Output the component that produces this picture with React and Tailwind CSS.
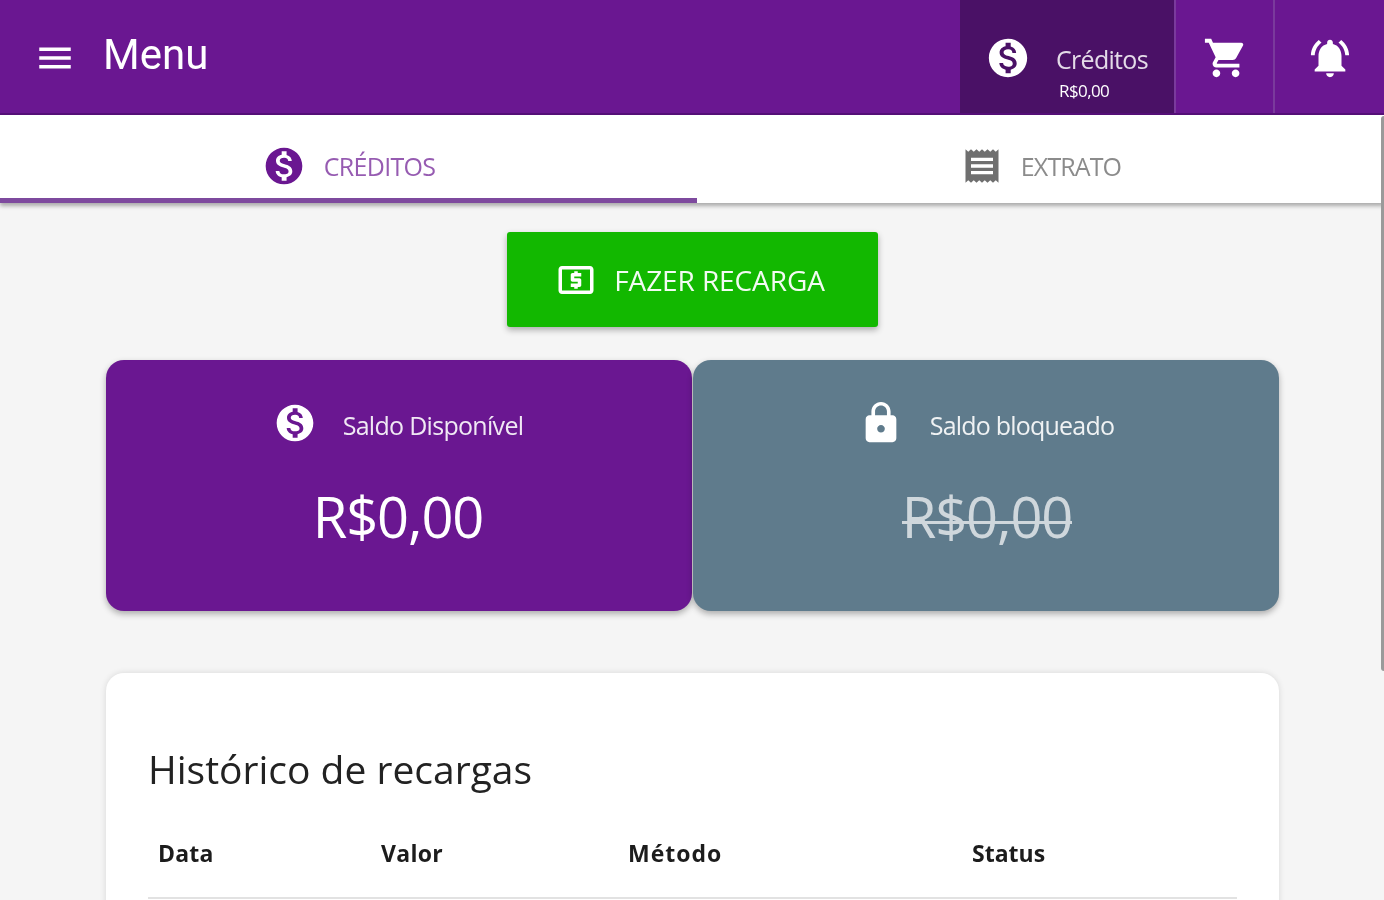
const P = {
  money: "M12 2C6.48 2 2 6.48 2 12s4.48 10 10 10 10-4.48 10-10S17.52 2 12 2zm1.41 16.09V20h-2.67v-1.93c-1.71-.36-3.16-1.46-3.27-3.4h1.96c.1 1.05.82 1.87 2.65 1.87 1.96 0 2.4-.98 2.4-1.59 0-.83-.44-1.61-2.67-2.14-2.48-.6-4.18-1.62-4.18-3.67 0-1.72 1.39-2.84 3.11-3.21V4h2.67v1.95c1.86.45 2.79 1.86 2.85 3.39H14.3c-.05-1.11-.64-1.87-2.22-1.87-1.5 0-2.4.68-2.4 1.64 0 .84.65 1.39 2.67 1.91s4.18 1.39 4.18 3.91c-.01 1.83-1.38 2.83-3.12 3.16z",
  menu: "M3 18h18v-2H3v2zm0-5h18v-2H3v2zm0-7v2h18V6H3z",
  cart: "M7 18c-1.1 0-1.99.9-1.99 2S5.9 22 7 22s2-.9 2-2-.9-2-2-2zM1 2v2h2l3.6 7.59-1.35 2.45c-.16.28-.25.61-.25.96 0 1.1.9 2 2 2h12v-2H7.42c-.14 0-.25-.11-.25-.25l.03-.12.9-1.63h7.45c.75 0 1.41-.41 1.75-1.03l3.58-6.49c.08-.14.12-.31.12-.48 0-.55-.45-1-1-1H5.21l-.94-2H1zm16 16c-1.1 0-1.99.9-1.99 2s.89 2 1.99 2 2-.9 2-2-.9-2-2-2z",
  bell: "M7.58 4.08L6.15 2.65C3.75 4.48 2.17 7.3 2.03 10.5h2c.15-2.65 1.51-4.97 3.55-6.42zm12.39 6.42h2c-.15-3.2-1.73-6.02-4.12-7.85l-1.42 1.43c2.02 1.45 3.39 3.77 3.54 6.42zM18 11c0-3.07-1.64-5.64-4.5-6.32V4c0-.83-.67-1.5-1.5-1.5s-1.5.67-1.5 1.5v.68C7.63 5.36 6 7.92 6 11v5l-2 2v1h16v-1l-2-2v-5zm-6 11c.14 0 .27-.01.4-.04.65-.14 1.18-.58 1.44-1.18.1-.24.15-.5.15-.78h-4c.01 1.1.9 2 2.01 2z",
  lock: "M18 8h-1V6c0-2.76-2.24-5-5-5S7 3.24 7 6v2H6c-1.1 0-2 .9-2 2v10c0 1.1.9 2 2 2h12c1.1 0 2-.9 2-2V10c0-1.1-.9-2-2-2zm-6 9c-1.1 0-2-.9-2-2s.9-2 2-2 2 .9 2 2-.9 2-2 2zm3.1-9H8.9V6c0-1.71 1.39-3.1 3.1-3.1 1.71 0 3.1 1.39 3.1 3.1v2z",
  receipt: "M18 17H6v-2h12v2zm0-4H6v-2h12v2zm0-4H6V7h12v2zM3 22l1.5-1.5L6 22l1.5-1.5L9 22l1.5-1.5L12 22l1.5-1.5L15 22l1.5-1.5L18 22l1.5-1.5L21 22V2l-1.5 1.5L18 2l-1.5 1.5L15 2l-1.5 1.5L12 2l-1.5 1.5L9 2 7.5 3.5 6 2 4.5 3.5 3 2v20z",
  atm: "M11 17h2v-1h1c.55 0 1-.45 1-1v-3c0-.55-.45-1-1-1h-3v-1h4V8h-2V7h-2v1h-1c-.55 0-1 .45-1 1v3c0 .55.45 1 1 1h3v1H9v2h2v1zm9-13H4c-1.11 0-1.99.89-1.99 2L2 18c0 1.11.89 2 2 2h16c1.11 0 2-.89 2-2V6c0-1.11-.89-2-2-2zm0 14H4V6h16v12z",
};

function Icon({ d, size, height, className = "" }) {
  return (
    <svg viewBox="0 0 24 24" width={size} height={height || size} preserveAspectRatio="none" fill="currentColor" className={`shrink-0 ${className}`}>
      <path d={d} />
    </svg>
  );
}

function SaldoCard({ icon, iconSize, label, value, className, rowClass = "", valueClass = "", labelClass = "", struck = false }) {
  return (
    <div className={`flex-1 h-[251px] rounded-[18px] shadow-[0_3px_6px_rgba(0,0,0,0.3)] flex flex-col items-center text-white ${className}`}>
      <div className={`flex items-center gap-[26px] mt-[40px] h-[46px] ${rowClass}`}>
        <Icon d={icon} size={iconSize} />
        <span className={`text-[25px] leading-none opacity-90 mt-[5px] ${labelClass}`}>{label}</span>
      </div>
      <div className={`relative text-[56px] leading-none mt-[42px] tracking-[-1.1px] ${valueClass}`}>
        {value}
        {struck && <span className="absolute left-0 right-0 top-[33px] h-[3px] bg-current" />}
      </div>
    </div>
  );
}

export default function App() {
  return (
    <div className="relative h-[900px] overflow-hidden bg-[#f5f5f5] font-['Open_Sans','Noto_Sans',sans-serif] blur-[0.7px]">
      <header className="flex h-[115px] bg-[#6a1791] border-b-2 border-[#551078] text-white">
        <div className="flex items-center flex-1 pl-[34px]">
          <Icon d={P.menu} size={42} className="mt-[2px]" />
          <span className="ml-[27px] mb-[3px] text-[42px] leading-none font-['Roboto',sans-serif]">Menu</span>
        </div>
        <div className="flex items-center w-[216px] bg-[#4a1166] border-r-2 border-[#7a3a9c] pl-[25px]">
          <Icon d={P.money} size={46} className="mt-[2px]" />
          <div className="ml-[25px] flex flex-col mt-[32px]">
            <span className="text-[25px] leading-[30px] opacity-85 tracking-[-0.7px]">Créditos</span>
            <span className="text-[17px] leading-[22px] ml-[3px] mt-[6px] tracking-[-0.6px]">R$0,00</span>
          </div>
        </div>
        <div className="flex items-center justify-center w-[99px] border-r-2 border-[#7a3a9c]">
          <Icon d={P.cart} size={46} className="ml-[2px] mt-[2px]" />
        </div>
        <div className="flex items-center justify-center flex-1 max-w-[109px]">
          <Icon d={P.bell} size={46} className="mt-[2px]" />
        </div>
      </header>

      <nav className="flex h-[88px] bg-white shadow-[0_3px_4px_rgba(0,0,0,0.3)]">
        <div className="flex w-[697px] items-center justify-center gap-[18px] border-b-[5px] border-[#7e4a9e] text-[#6a1791] pt-[18px]">
          <Icon d={P.money} size={44} />
          <span className="text-[25px] leading-none opacity-70 tracking-[-0.7px] mt-[2px]">CRÉDITOS</span>
        </div>
        <div className="flex flex-1 items-center justify-center gap-[17px] text-[#6f6f6f] pt-[18px] pb-[5px]">
          <Icon d={P.receipt} size={44} height={40} />
          <span className="text-[25px] leading-none opacity-80 tracking-[-0.9px] mt-[2px]">EXTRATO</span>
        </div>
      </nav>

      <main className="flex flex-col items-center pl-[106px] pr-[105px]">
        <button className="flex items-center justify-center gap-[17px] mt-[29px] w-[371px] h-[95px] pr-[5px] rounded-[3px] bg-[#12b800] text-white shadow-[0_3px_6px_rgba(0,0,0,0.3)]">
          <Icon d={P.atm} size={42} />
          <span className="text-[28px] leading-none opacity-95 tracking-[-0.1px]">FAZER RECARGA</span>
        </button>

        <div className="flex w-full mt-[33px] gap-[1px]">
          <SaldoCard icon={P.money} iconSize={44} label="Saldo Disponível" labelClass="tracking-[-0.7px]" rowClass="mr-[2px]" value="R$0,00" className="bg-[#6a1791]" valueClass="mr-[2px]" />
          <SaldoCard icon={P.lock} iconSize={46} label="Saldo bloqueado" labelClass="tracking-[-0.8px]" value="R$0,00" struck className="bg-[#5f7b8c]" valueClass="ml-[2px] opacity-70" />
        </div>

        <section className="w-full mt-[62px] h-[400px] bg-white rounded-[18px] shadow-[0_0_6px_rgba(0,0,0,0.12)] px-[42px] pt-[76px]">
          <h2 className="text-[39px] leading-none text-[#222]">Histórico de recargas</h2>
          <div className="grid grid-cols-[223px_247px_344px_1fr] mt-[54px] h-[57px] border-b-2 border-[#e2e2e2] pl-[10px] text-[23px] font-bold leading-none text-[#1c1c1c]">
            <span className="tracking-[0.2px]">Data</span>
            <span className="tracking-[0.3px]">Valor</span>
            <span className="tracking-[1px]">Método</span>
            <span>Status</span>
          </div>
        </section>
      </main>

      <div className="absolute right-0 top-[116px] h-[555px] w-[3px] rounded-l bg-[#9a9a9a]" />
    </div>
  );
}
